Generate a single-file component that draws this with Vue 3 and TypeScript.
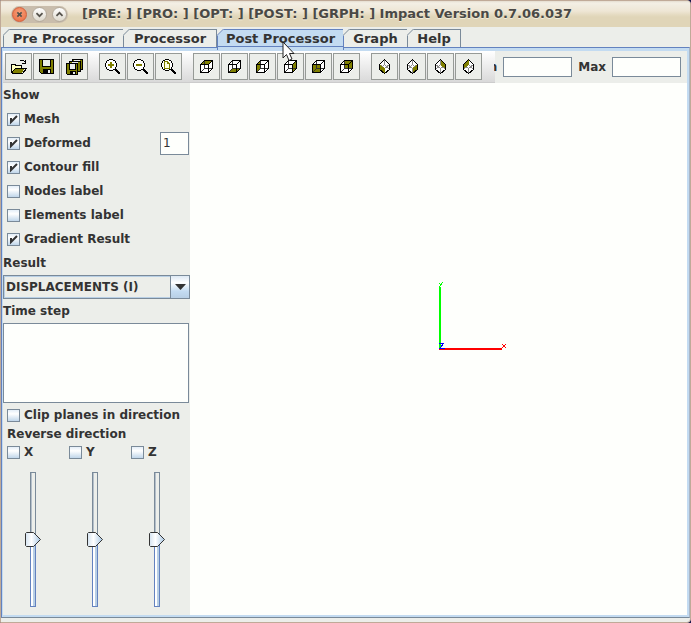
<script setup lang="ts">
import { ref, reactive } from 'vue'

const title = '[PRE: ] [PRO: ] [OPT: ] [POST: ] [GRPH: ] Impact Version 0.7.06.037'
const tabs = ['Pre Processor', 'Processor', 'Post Processor', 'Graph', 'Help']
const activeTab = ref('Post Processor')

const cubeFaces = [
  { name: 'Top view', d: 'M1.5 5.5L5.5 1.5H13.5L9.5 5.5Z' },
  { name: 'Bottom view', d: 'M1.5 13.5L5.5 9.5H13.5L9.5 13.5Z' },
  { name: 'Left view', d: 'M1.5 5.5L5.5 1.5V9.5L1.5 13.5Z' },
  { name: 'Right view', d: 'M9.5 5.5L13.5 1.5V9.5L9.5 13.5Z' },
  { name: 'Front view', d: 'M1.5 5.5H9.5V13.5H1.5Z' },
  { name: 'Back view', d: 'M5.5 1.5H13.5V9.5H5.5Z' },
]
const isoFaces = [
  { name: 'Isometric front left', d: 'M2.5 5.5L7.5 9V14L2.5 10.5Z' },
  { name: 'Isometric front right', d: 'M12.5 5.5L7.5 9V14L12.5 10.5Z' },
  { name: 'Isometric back right', d: 'M7.5 1L12.5 5.5V10L7.5 6Z' },
  { name: 'Isometric back left', d: 'M7.5 1L2.5 5.5V10L7.5 6Z' },
]

const show = reactive([
  { id: 'mesh', label: 'Mesh', on: true },
  { id: 'deformed', label: 'Deformed', on: true },
  { id: 'contour', label: 'Contour fill', on: true },
  { id: 'nodes', label: 'Nodes label', on: false },
  { id: 'elements', label: 'Elements label', on: false },
  { id: 'gradient', label: 'Gradient Result', on: true },
])
const scale = ref('1')
const result = ref('DISPLACEMENTS (I)')
const clip = ref(false)
const min = ref('')
const max = ref('')
const planes = reactive([
  { axis: 'X', reverse: false, pos: 50 },
  { axis: 'Y', reverse: false, pos: 50 },
  { axis: 'Z', reverse: false, pos: 50 },
])
</script>

<template>
  <div class="window">
    <header class="titlebar">
      <div class="wm">
        <button class="wm-btn close" aria-label="Close"><svg viewBox="0 0 15 15"><path d="M5 5l5 5M10 5l-5 5" /></svg></button>
        <button class="wm-btn" aria-label="Minimize"><svg viewBox="0 0 15 15"><path d="M4 6l3.500 3.500L11 6" /></svg></button>
        <button class="wm-btn" aria-label="Maximize"><svg viewBox="0 0 15 15"><path d="M4 9l3.500-3.500L11 9" /></svg></button>
      </div>
      <h1>{{ title }}</h1>
    </header>

    <nav class="tabs">
      <button v-for="t in tabs" :key="t" class="tab" :class="{ active: t === activeTab }" @click="activeTab = t">
        <svg class="corner" viewBox="0 0 7 7" aria-hidden="true">
          <path class="cut" d="M0 0H7L0 7Z" /><path class="edge" d="M0 6.500L6.500 0" />
        </svg>
        <span>{{ t }}</span>
        <svg v-if="t === 'Post Processor'" class="pointer" viewBox="0 0 13 21" aria-hidden="true">
          <path d="M1 1V17L4.500 13.500L7 19.500L10 18L7.500 12.500H12Z" />
        </svg>
      </button>
    </nav>

    <main class="content">
      <div class="topbar">
        <div class="toolbar">
          <div class="group">
            <button class="tool" aria-label="Open">
              <svg viewBox="0 0 17 17">
                <path class="olive" d="M2 15V7H5L6 8H11V10H15L12 15Z" />
                <path class="cream" d="M2 7H5V8H11V10H5L2 14Z" />
                <path class="ln" d="M1.500 15V6.500H5.500V7.500H11.500V10M1.500 15.500H12.500L16.500 10.500H5.500L1.500 15M9.500 3.500L10.500 2.500H13.500L15.500 4.500M15.500 1.500V5.500H12" />
              </svg>
            </button>
            <button class="tool" aria-label="Save">
              <svg viewBox="0 0 17 17">
                <path class="olive" d="M2 2H15V15H3L2 14Z" /><path class="pale" d="M4 2H13V8H4Z" />
                <path class="black" d="M5 11H13V15H5Z" /><path class="pale" d="M10 12H12V15H10Z" />
                <path class="ln" d="M1.500 1.500H15.500V15.500H3.500L1.500 13.500ZM4.500 2V8.500H12.500V2" />
              </svg>
            </button>
            <button class="tool" aria-label="Save all">
              <svg viewBox="0 0 17 17">
                <path class="olive" d="M6 1H16V11H6Z" /><path class="pale" d="M8 1H14V4H8Z" /><path class="ln" d="M6.500 4V1.500H16.500V11.500H14" />
                <path class="olive" d="M3 3H14V14H3Z" /><path class="pale" d="M6 4H12V7H6Z" /><path class="ln" d="M3.500 6V3.500H14.500V13.500H12" />
                <path class="olive" d="M1 6H12V16H1Z" /><path class="pale" d="M3 6H9V11H3Z" /><path class="black" d="M4 13H10V16H4Z" /><path class="pale" d="M7 14H9V16H7Z" />
                <path class="ln" d="M.5 5.500H11.500V16.500H1.500L.5 15.500ZM3.500 6V11.500H9.500V6" />
              </svg>
            </button>
          </div>
          <div class="group">
            <button class="tool" aria-label="Zoom in">
              <svg viewBox="0 0 17 17"><circle class="lens" cx="7" cy="7" r="5.500" /><path class="handle" d="M11 11L16 16" /><path class="sign" d="M4 7H10M7 4V10" /></svg>
            </button>
            <button class="tool" aria-label="Zoom out">
              <svg viewBox="0 0 17 17"><circle class="lens" cx="7" cy="7" r="5.500" /><path class="handle" d="M11 11L16 16" /><path class="sign" d="M4 7H10" /></svg>
            </button>
            <button class="tool" aria-label="Zoom to fit">
              <svg viewBox="0 0 17 17"><circle class="lens" cx="7" cy="7" r="5.500" /><path class="handle" d="M11 11L16 16" /><path class="page" d="M4.500 3.500H7.500L9.500 5.500V10.500H4.500ZM7.500 3.500V5.500H9.500" /></svg>
            </button>
          </div>
          <div class="group">
            <button v-for="f in cubeFaces" :key="f.name" class="tool" :aria-label="f.name">
              <svg class="small" viewBox="0 0 15 15">
                <path class="white" d="M1 5L5 1H14V10L10 14H1Z" />
                <path class="olive" :d="f.d" />
                <path class="thin" d="M5.500 2V9.500H13M5.500 9.500L2 13" />
                <path class="ln" d="M1.500 5.500H9.500V13.500H1.500ZM1.500 5.500L5.500 1.500H13.500V9.500L9.500 13.500M9.500 5.500L13.500 1.500" />
              </svg>
            </button>
          </div>
          <div class="group">
            <button v-for="f in isoFaces" :key="f.name" class="tool" :aria-label="f.name">
              <svg class="small" viewBox="0 0 15 15">
                <path class="white" d="M7.500 1L12.500 5.500V10.500L7.500 14.500L2.500 10.500V5.500Z" />
                <path class="faint" d="M7.500 1V5.500L2.500 10.500M7.500 5.500L12.500 10.500M2.500 5.500L7.500 9.500L12.500 5.500M7.500 9.500V14" />
                <path class="olive" :d="f.d" />
                <path class="ln" d="M7.500 .5L12.500 5.500V10.500L7.500 14.500L2.500 10.500V5.500Z" />
              </svg>
            </button>
          </div>
        </div>
        <div class="range-fields">
          <label class="clipped" for="min">Min</label><input id="min" v-model="min" class="field" type="text" />
          <label for="max">Max</label><input id="max" v-model="max" class="field" type="text" />
        </div>
      </div>

      <div class="body">
        <aside class="side">
          <h2>Show</h2>
          <div v-for="s in show" :key="s.id" class="row">
            <label class="check"><input v-model="s.on" type="checkbox" /><span>{{ s.label }}</span></label>
            <input v-if="s.id === 'deformed'" v-model="scale" class="field factor" type="text" aria-label="Deformation scale" />
          </div>
          <label class="heading" for="result">Result</label>
          <div class="combo">
            <select id="result" v-model="result"><option>DISPLACEMENTS (I)</option></select>
            <span class="drop" aria-hidden="true"><svg viewBox="0 0 11 6"><path d="M0 0H11L5.500 6Z" /></svg></span>
          </div>
          <label class="heading" for="steps">Time step</label>
          <select id="steps" class="steps" size="4"></select>
          <div class="row"><label class="check"><input v-model="clip" type="checkbox" /><span>Clip planes in direction</span></label></div>
          <h3>Reverse direction</h3>
          <div class="planes">
            <div v-for="p in planes" :key="p.axis" class="plane">
              <label class="check"><input v-model="p.reverse" type="checkbox" /><span>{{ p.axis }}</span></label>
              <input v-model.number="p.pos" class="slider" type="range" min="0" max="100" :aria-label="p.axis + ' clip plane'" :style="{ '--rest': 100 - p.pos + '%' }" />
            </div>
          </div>
        </aside>
        <section class="view">
          <svg class="axes" viewBox="0 0 70 70" aria-label="Coordinate axes">
            <path fill="#00ff00" d="M1 5H3V67H1Z" /><path fill="#ff0000" d="M1 66H64V68H1Z" />
            <path stroke="#00ff00" d="M1.500 1.500L3 3M4.500 .5L1.500 5" />
            <path stroke="#ff0000" d="M64 62L68 66M68 62L64 66" />
            <path stroke="#0000ff" d="M1 61.500H5.500L2 66.500H7" />
          </svg>
        </section>
      </div>
    </main>
  </div>
</template>

<style>
body { margin: 0; background: #14144a; }
</style>

<style scoped>
* { box-sizing: border-box; }
.window {
  min-height: 100vh; display: flex; flex-direction: column; background: #eceeea;
  border: 1px solid #c0aa98; color: #333; font: bold 12px/16px "DejaVu Sans", sans-serif;
  overflow: hidden; border-radius: 0 4px 4px 0;
}
button, input, select { font: inherit; color: inherit; margin: 0; padding: 0; }
h1, h2, h3 { margin: 0; font: inherit; }

.titlebar {
  height: 26px; display: flex; align-items: center; gap: 14px; padding-left: 10px; padding-right: 8px;
  background: linear-gradient(#e4dccf, #f3efe5 2px, #eee6d5 10px, #e4dac0 14px, #e0d5b8 16px, #e0d5b8);
}
.titlebar h1 { font-size: 13px; white-space: nowrap; color: #4a4946; text-shadow: 0 1px #f2ecdc; }
.wm { display: flex; align-items: center; gap: 5px; height: 17px; padding: 0 1px; border-radius: 9px; background: #c9bdac; }
.wm-btn { width: 15px; height: 15px; border: 1px solid #b4aa9b; border-radius: 50%; background: linear-gradient(#fff, #ddd8cc); display: flex; }
.wm-btn.close { border-color: #d2613c; background: radial-gradient(circle at 50% 35%, #f8a17b, #e96a40); }
.wm-btn svg { width: 13px; height: 13px; fill: none; stroke: #56534d; stroke-width: 2; }

.tabs { display: flex; height: 20px; padding: 2px 2px 0; background: #eceeea; }
.tab {
  position: relative; height: 18px; padding: 0; border: 1px solid #7a8a99; border-bottom: 0; border-left: 0;
  background: #eceeea; font-size: 13px; line-height: 17px; white-space: nowrap;
}
.tab:nth-child(1) { flex: 0 0 121px; }
.tab:nth-child(2) { flex: 0 0 93px; }
.tab:nth-child(3) { flex: 0 0 127px; }
.tab:nth-child(4) { flex: 0 0 64px; }
.tab:nth-child(5) { flex: 0 0 53px; }
.tab:first-child { border-left: 1px solid #7a8a99; }
.tab.active { z-index: 1; background: #c3dbf1; border-color: #6382bf; height: 21px; padding-bottom: 3px; border-left: 1px solid #6382bf; }
.tab.active::after { content: ""; position: absolute; left: 0; right: 0; top: 0; height: 16px; border-bottom: 1px solid #6382bf; }
.corner { position: absolute; left: -1px; top: -1px; width: 7px; height: 7px; z-index: 1; }
.cut { fill: #eceeea; }
.edge { fill: none; stroke: #7a8a99; }
.active .edge { stroke: #6382bf; }
.pointer { position: absolute; left: 64px; top: 11px; width: 13px; height: 21px; z-index: 3; }
.pointer path { fill: #fff; stroke: #222; }

.content { flex: 1; display: flex; flex-direction: column; border: 1px solid #6382bf; border-bottom-color: #7a8a99; border-right-color: #a9b6c5; margin-bottom: 4px; }
.topbar { display: flex; height: 35px; flex: none; border: solid #c3dbf1; border-width: 3px 2px 0 1px; background: #eceeea; }
.toolbar {
  flex: none; display: flex; align-items: center; gap: 11px; padding: 0 13px 1px 2px;
  border-bottom: 1px solid #ccc; background: linear-gradient(#fff, #d9d9d9);
}
.group { display: flex; gap: 1px; }
.tool {
  width: 27px; height: 27px; border: 1px solid #969a96; background: #eceeea;
  display: flex; align-items: center; justify-content: center;
}
.tool svg { width: 17px; height: 17px; flex: none; shape-rendering: crispEdges; fill: none; }
.tool .small { width: 15px; height: 15px; }
.tool .olive { fill: #808000; }
.tool .cream { fill: #ffffc0; }
.tool .pale { fill: #eceeea; }
.tool .white { fill: #fff; }
.tool .black { fill: #000; }
.ln { stroke: #000; }
.thin { stroke: #333; }
.faint { stroke: #8c8c8c; }
.lens { fill: #fff; stroke: #000; }
.handle { stroke: #000; stroke-width: 2; }
.sign { stroke: #808000; stroke-width: 2; }
.page { stroke: #808000; fill: #ffffe0; }

.range-fields { flex: 1; min-width: 0; display: flex; align-items: center; justify-content: flex-end; gap: 6px; padding-right: 6px; padding-bottom: 1px; }
.clipped { flex: 0 1 auto; min-width: 3px; display: flex; justify-content: flex-end; overflow: hidden; }
.field {
  width: 69px; height: 20px; flex: none; padding: 0 2px; border: 1px solid #7a8a99; border-radius: 0;
  background: #fefffc; outline: 0; font-weight: normal;
}

.body { flex: 1; display: flex; border: solid #c3dbf1; border-width: 0 2px 2px 1px; }
.side { flex: 0 0 187px; min-width: 0; display: flex; flex-direction: column; background: #eceeea; }
.side h2, .heading { height: 24px; line-height: 25px; }
.row { height: 24px; display: flex; align-items: center; justify-content: space-between; padding-left: 4px; padding-right: 1px; }
.check { display: flex; align-items: center; gap: 4px; line-height: 17px; white-space: nowrap; }
.check input {
  appearance: none; width: 13px; height: 13px; flex: none; border: 1px solid #7a8a99;
  background: linear-gradient(#e4eef8, #fff 35%, #c0d6ea);
}
.check input:checked {
  background: url("data:image/svg+xml,%3Csvg xmlns='http://www.w3.org/2000/svg' viewBox='0 0 11 11'%3E%3Cpath d='M3 4V8L9 2' fill='none' stroke='%23333' stroke-width='2'/%3E%3C/svg%3E"), linear-gradient(#e4eef8, #fff 35%, #c0d6ea);
}
.factor { width: 29px; height: 23px; }
.combo { position: relative; height: 24px; display: flex; }
.combo select {
  appearance: none; width: 100%; height: 24px; border: 1px solid #7a8a99; border-radius: 0; padding-left: 2px;
  background: #eceeea; box-shadow: inset 0 0 0 1px #b8cfe5; outline: 0;
}
.drop {
  position: absolute; right: 0; top: 0; width: 20px; height: 24px; border: 1px solid #7a8a99; pointer-events: none;
  display: flex; align-items: center; justify-content: center; background: linear-gradient(#dce8f4, #fff 30%, #c3dbf1 70%, #b8cfe5);
}
.drop svg { width: 11px; height: 6px; fill: #333; }
.steps { appearance: none; height: 80px; margin-right: 1px; border: 1px solid #7a8a99; border-radius: 0; background: #fefffc; outline: 0; }
.side h3 { height: 14px; line-height: 15px; padding-left: 4px; }
.planes { display: flex; gap: 12px; padding-left: 4px; padding-top: 3px; }
.plane { flex: 0 0 50px; display: flex; flex-direction: column; align-items: flex-start; gap: 11px; }
.slider {
  appearance: none; writing-mode: vertical-lr; direction: rtl; width: 16px; height: 135px; margin-left: 18px; background: none;
}
.slider::-webkit-slider-runnable-track {
  width: 6px; height: 135px;
  background:
    linear-gradient(#7a8a99, #7a8a99) top / 100% 1px no-repeat,
    linear-gradient(#6382bf, #6382bf) bottom / 100% 1px no-repeat,
    linear-gradient(to right, #7a8a99 1px, #b4bfca 1px 2px, #eceeea 2px 5px, #7a8a99 5px) top / 100% var(--rest) no-repeat,
    linear-gradient(to right, #6382bf 1px, #fff 1px 3px, #b8cfe5 3px 5px, #6382bf 5px);
}
.slider::-webkit-slider-thumb {
  appearance: none; width: 16px; height: 15px; margin-left: -5px;
  background: url("data:image/svg+xml,%3Csvg xmlns='http://www.w3.org/2000/svg' viewBox='0 0 16 15'%3E%3Cdefs%3E%3ClinearGradient id='g'%3E%3Cstop stop-color='%23d4e3f1'/%3E%3Cstop offset='.4' stop-color='%23fff'/%3E%3Cstop offset='1' stop-color='%23a8c7e4'/%3E%3C/linearGradient%3E%3C/defs%3E%3Cpath d='M1.500 .5H8.500L15.500 7.500L8.500 14.500H1.500L.5 13.500V1.500Z' fill='url(%23g)' stroke='%23333'/%3E%3C/svg%3E") no-repeat;
}
.view { flex: 1; min-width: 0; display: flex; align-items: center; justify-content: center; background: #fefffc; }
.axes { width: 70px; height: 70px; margin-top: -64px; margin-left: 68px; fill: none; shape-rendering: crispEdges; }
</style>
